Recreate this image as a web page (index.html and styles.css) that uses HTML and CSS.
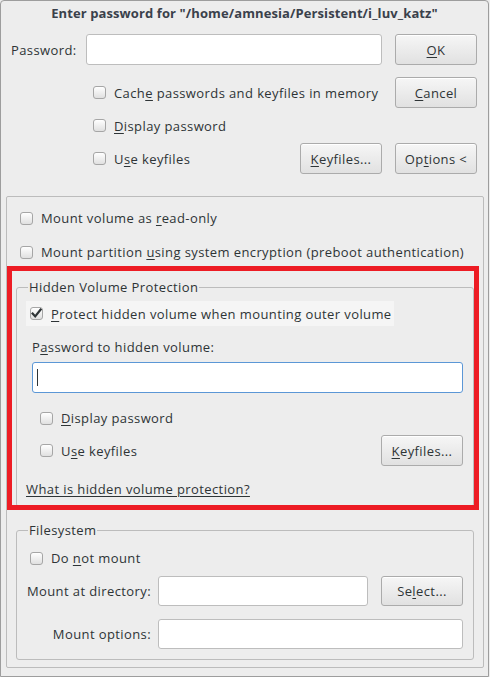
FILE: index.html
```html
<!DOCTYPE html>
<html>
<head>
<meta charset="utf-8">
<link rel="stylesheet" href="styles.css">
</head>
<body>
<div class="window">
  <div class="titlebar">Enter password for "/home/amnesia/Persistent/i_luv_katz"</div>

  <div class="top">
    <span class="pw-lbl">Password:</span>
    <div class="entry pw-entry"></div>
    <div class="btn ok"><u>O</u>K</div>

    <div class="check cache"><span class="box"></span><span>Cach<u>e</u> passwords and keyfiles in memory</span></div>
    <div class="btn cancel"><u>C</u>ancel</div>

    <div class="check disp"><span class="box"></span><span><u>D</u>isplay password</span></div>

    <div class="keys-row">
      <div class="check"><span class="box"></span><span>U<u>s</u>e keyfiles</span></div>
      <div class="btn"><u>K</u>eyfiles...</div>
    </div>
    <div class="btn options">Op<u>t</u>ions &lt;</div>
  </div>

  <div class="frame">
    <div class="check frow"><span class="box"></span><span>Mount volume as <u>r</u>ead-only</span></div>
    <div class="check frow frow2"><span class="box"></span><span>Mount partition <u>u</u>sing system encryption (preboot authentication)</span></div>

    <fieldset class="group hidden-group">
      <legend>Hidden Volume Protection</legend>
      <div class="check protect"><span class="box checked"><svg width="13" height="13" viewBox="0 0 13 13"><path d="M2.6 6.6 L5.2 9.4 L10.6 2.6" fill="none" stroke="#2e3436" stroke-width="2.2" stroke-linecap="square"/></svg></span><span><u>P</u>rotect hidden volume when mounting outer volume</span></div>
      <div class="hv-lbl">P<u>a</u>ssword to hidden volume:</div>
      <div class="entry focus"><span class="caret"></span></div>
      <div class="check indent hv-disp"><span class="box"></span><span><u>D</u>isplay password</span></div>
      <div class="hv-keys">
        <div class="check indent"><span class="box"></span><span>U<u>s</u>e keyfiles</span></div>
        <div class="btn"><u>K</u>eyfiles...</div>
      </div>
      <div class="link">What is hidden volume protection?</div>
    </fieldset>

    <fieldset class="group fs-group">
      <legend>Filesystem</legend>
      <div class="check fs-nomount"><span class="box"></span><span>Do <u>n</u>ot mount</span></div>
      <div class="fs-grid">
        <span class="fs-lbl">Mount at directory:</span>
        <div class="entry"></div>
        <div class="btn">Se<u>l</u>ect...</div>
        <span class="fs-lbl">Mount options:</span>
        <div class="entry wide"></div>
      </div>
    </fieldset>
  </div>

  <div class="annotation"></div>
</div>
</body>
</html>
```

FILE: styles.css
```css
* { box-sizing: border-box; }

html, body {
  margin: 0;
  padding: 0;
  background: #ededed;
}

body {
  font-family: "Open Sans", "Noto Sans", "DejaVu Sans", sans-serif;
  font-size: 13px;
  letter-spacing: 0.4px;
  color: #2e3436;
}

u {
  text-decoration: underline;
  text-underline-offset: 2px;
  text-decoration-thickness: 1px;
}

.window {
  position: relative;
  width: 489px;
  height: 677px;
  border: 1px solid #9d9d9d;
  border-radius: 4px 4px 0 0;
  background: #ededed;
}

.titlebar {
  height: 25px;
  line-height: 25px;
  text-align: center;
  font-weight: bold;
  letter-spacing: 0.1px;
  color: #3a414b;
}

/* ---------- top area ---------- */
.top {
  display: grid;
  grid-template-columns: 62px 296px 82px;
  grid-template-rows: 31px 12px 31px 35px 31px;
  column-gap: 13px;
  padding: 8px 0 0 10px;
}

.pw-lbl {
  grid-row: 1;
  grid-column: 1;
  align-self: center;
  white-space: nowrap;
}
.pw-entry { grid-row: 1; grid-column: 2; }
.ok { grid-row: 1; grid-column: 3; }

.cache { grid-row: 3; grid-column: 2; align-self: center; padding-left: 7px; }
.cancel { grid-row: 3; grid-column: 3; }

.disp { grid-row: 4; grid-column: 2; align-self: center; padding-left: 7px; }

.keys-row {
  grid-row: 5;
  grid-column: 2;
  display: flex;
  align-items: center;
  justify-content: space-between;
  padding-left: 7px;
}
.options { grid-row: 5; grid-column: 3; }

/* ---------- controls ---------- */
.check {
  display: flex;
  align-items: center;
  gap: 8px;
  height: 22px;
  white-space: nowrap;
}

.box {
  flex: none;
  width: 13px;
  height: 13px;
  border: 1px solid #a6a6a6;
  border-radius: 3px;
  background: linear-gradient(#ffffff, #e0e0e0);
  position: relative;
}
.box.checked svg {
  position: absolute;
  left: -1px;
  top: -1px;
}

.btn {
  width: 82px;
  height: 31px;
  border: 1px solid #ababab;
  border-radius: 3px;
  background: linear-gradient(#f6f6f6, #e1e1e1);
  box-shadow: inset 0 1px #ffffff;
  display: flex;
  align-items: center;
  justify-content: center;
  white-space: nowrap;
  color: #2e3436;
}

.entry {
  height: 31px;
  background: #ffffff;
  border: 1px solid #bdbdbd;
  border-radius: 3px;
}

.entry.focus {
  border-color: #5b97d6;
  margin: 6px 0 0 6px;
  padding: 6px 0 0 4px;
}
.caret {
  display: block;
  width: 1px;
  height: 17px;
  background: #2e3436;
}

/* ---------- options frame ---------- */
.frame {
  margin: 22px 5px 0 5px;
  width: 478px;
  height: 472px;
  border: 1px solid #bcbcbc;
  border-radius: 2px;
  padding: 10px 9px 0 9px;
}

.frow { padding-left: 4px; }
.frow2 { margin-top: 12px; }

.group {
  margin: 0;
  padding: 0 10px 0 9px;
  border: 1px solid #bcbcbc;
  border-radius: 3px;
  min-width: 0;
}
.group legend {
  padding: 0 1px;
  margin-left: 2px;
  line-height: 18px;
}

.hidden-group {
  margin-top: 15px;
  padding-top: 5px;
  padding-bottom: 8px;
}

.protect {
  display: inline-flex;
  height: 25px;
  background: #f5f5f5;
  padding: 0 2px 0 4px;
}

.hv-lbl {
  margin-top: 12px;
  padding-left: 6px;
  line-height: 18px;
}

.indent { padding-left: 14px; }
.hv-disp { margin-top: 14px; }

.hv-keys {
  margin-top: 6px;
  display: flex;
  align-items: center;
  justify-content: space-between;
}

.link {
  margin-top: 14px;
  line-height: 18px;
  text-decoration: underline;
  text-underline-offset: 2px;
}

.fs-group {
  margin-top: 14px;
  padding-top: 8px;
  padding-bottom: 10px;
}

.fs-nomount { padding-left: 4px; }

.fs-grid {
  margin-top: 7px;
  display: grid;
  grid-template-columns: 125px 1fr 88px;
  grid-template-rows: 30px 30px;
  column-gap: 7px;
  row-gap: 13px;
}
.fs-grid .btn { height: 30px; margin-left: 6px; }
.fs-grid .entry { height: 30px; }
.fs-grid .entry.wide { grid-column: 2 / 4; }
.fs-lbl {
  align-self: center;
  text-align: right;
  white-space: nowrap;
}

/* red annotation rectangle drawn over the dialog */
.annotation {
  position: absolute;
  left: 6px;
  top: 265px;
  width: 472px;
  height: 244px;
  border: 5px solid #ed1c24;
  pointer-events: none;
}
```
